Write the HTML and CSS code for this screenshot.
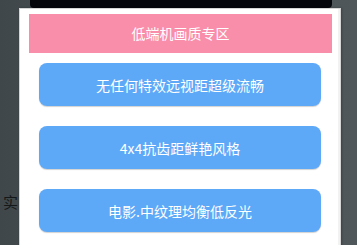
FILE: index.html
```html
<!DOCTYPE html>
<html>
<head>
    <title>画质设置</title>
    <link rel="stylesheet" href="styles.css">
</head>
<body>
    <div class="backdrop">
        <div class="topbar"></div>
        <span class="behind">实</span>
        <div class="panel">
            <div class="title">低端机画质专区</div>
            <div class="options">
                <button class="option">无任何特效远视距超级流畅</button>
                <button class="option">4x4抗齿距鲜艳风格</button>
                <button class="option">电影.中纹理均衡低反光</button>
            </div>
        </div>
    </div>
</body>
</html>
```

FILE: styles.css
```css
body {
    margin: 0;
    font-family: "Noto Sans CJK SC", "Noto Sans", sans-serif;
    background: #4a5052;
}
.backdrop {
    position: relative;
    height: 245px;
    overflow: hidden;
    background: linear-gradient(90deg, #40474a 0%, #4c5254 40%, #50575a 100%);
}
.topbar {
    height: 8px;
    margin: 0 25px 0 30px;
    background: #04060b;
    border-radius: 0 0 4px 4px;
}
.behind {
    position: absolute;
    left: 3px;
    top: 191px;
    font-size: 15px;
    color: #151819;
}
.panel {
    position: relative;
    margin-left: 19px;
    width: 303px;
    height: 240px;
    padding: 5px 8px 0 9px;
    background: #ffffff;
    border: 1px solid #d6d6d6;
    box-shadow: inset -2px 0 0 #f2f2f2, 1px 0 2px rgba(0, 0, 0, 0.25);
}
.title {
    height: 39px;
    line-height: 39px;
    text-align: center;
    background: #f98eaa;
    color: #ffffff;
    font-size: 14px;
}
.options {
    display: flex;
    flex-direction: column;
    gap: 20px;
    padding: 10px 11px 0 10px;
}
.option {
    height: 43px;
    border: none;
    border-radius: 8px;
    background: #5ea8f8;
    color: #ffffff;
    font-family: inherit;
    font-size: 14px;
    box-shadow: 0 1px 1px rgba(0, 0, 0, 0.18);
}
```
